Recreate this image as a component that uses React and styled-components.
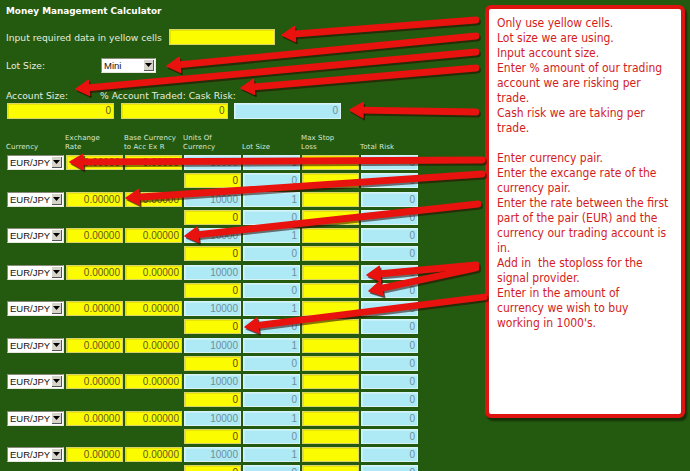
import styled, { createGlobalStyle } from "styled-components";

const GlobalStyle = createGlobalStyle`
  body {
    margin: 0;
    background: #245a10;
  }
`

const arrows = [
  [476, 20, 282, 35],
  [476, 36, 167, 66],
  [476, 52, 76, 89],
  [476, 68, 241, 88],
  [476, 112, 350, 110],
  [482, 160, 70, 162],
  [482, 174, 126, 198],
  [478, 204, 185, 236],
  [476, 265, 367, 275],
  [476, 268, 369, 291],
  [484, 297, 245, 327],
]

const columns = [
  "Currency",
  "Exchange\nRate",
  "Base Currency\nto Acc Ex R",
  "Units Of\nCurrency",
  "Lot Size",
  "Max Stop\nLoss",
  "Total Risk",
]

function Arrow({ x1, y1, x2, y2, dx = 0, dy = 0, color }) {
  const len = Math.hypot(x2 - x1, y2 - y1)
  const ux = (x2 - x1) / len
  const uy = (y2 - y1) / len
  const head = 13
  const half = 7.5
  const bx = x2 - ux * head
  const by = y2 - uy * head
  const pts = [
    [x2, y2],
    [bx - uy * half, by + ux * half],
    [bx + uy * half, by - ux * half],
  ]
    .map(([a, b]) => `${a + dx},${b + dy}`)
    .join(" ")
  return (
    <g>
      <line
        x1={x1 + dx}
        y1={y1 + dy}
        x2={bx + ux * 2 + dx}
        y2={by + uy * 2 + dy}
        stroke={color}
        strokeWidth="6.8"
        strokeLinecap="round"
      />
      <polygon points={pts} fill={color} stroke={color} strokeWidth="1.5" strokeLinejoin="round" />
    </g>
  )
}

function Select({ value, width }) {
  return (
    <SelectBox $width={width}>
      <span>{value}</span>
      <SelectButton>
        <svg width="7" height="4" viewBox="0 0 7 4">
          <path d="M0 0h7L3.5 4z" fill="#000" />
        </svg>
      </SelectButton>
    </SelectBox>
  )
}

export default function App() {
  const pairs = Array.from({ length: 9 })

  return (
    <Page>
      <GlobalStyle />
      <Calculator>
        <Title>Money Management Calculator</Title>
        <FieldRow $label={163} $top={12}>
          <Label>Input required data in yellow cells</Label>
          <Cell $kind="yellow" $w={106} />
        </FieldRow>
        <FieldRow $label={95} $top={12}>
          <Label>Lot Size:</Label>
          <Select value="Mini" width={55} />
        </FieldRow>
        <AccountLabels>
          <Label>Account Size:</Label>
          <Label>% Account Traded: Cask Risk:</Label>
        </AccountLabels>
        <AccountInputs>
          <Cell $kind="yellow">0</Cell>
          <Cell $kind="yellow">0</Cell>
          <Cell $kind="cyan">0</Cell>
        </AccountInputs>
        <HeaderRow>
          {columns.map((c) => (
            <HeadCell key={c}>{c}</HeadCell>
          ))}
        </HeaderRow>
        <Table>
          {pairs.map((_, i) => (
            <Pair key={i}>
              <Select value="EUR/JPY" />
              <Cell $kind="yellow">0.00000</Cell>
              <Cell $kind="yellow">0.00000</Cell>
              <Cell $kind="cyan">10000</Cell>
              <Cell $kind="cyan">1</Cell>
              <Cell $kind="yellow" />
              <Cell $kind="cyan">0</Cell>

              <Blank />
              <Blank />
              <Blank />
              <Cell $kind="yellow" $strong>0</Cell>
              <Cell $kind="cyan">0</Cell>
              <Cell $kind="yellow" />
              <Cell $kind="cyan">0</Cell>
            </Pair>
          ))}
        </Table>
      </Calculator>

      <Notes>
        <p>
          Only use yellow cells.<br />
          Lot size we are using.<br />
          Input account size.<br />
          Enter % amount of our trading<br />
          account we are risking per<br />
          trade.<br />
          Cash risk we are taking per<br />
          trade.
        </p>
        <p>
          Enter currency pair.<br />
          Enter the excange rate of the<br />
          currency pair.<br />
          Enter the rate between the first<br />
          part of the pair (EUR) and the<br />
          currency our trading account is<br />
          in.<br />
          Add in&nbsp; the stoploss for the<br />
          signal provider.<br />
          Enter in the amount of<br />
          currency we wish to buy<br />
          working in 1000's.
        </p>
      </Notes>

      <Overlay width="690" height="471" viewBox="0 0 690 471">
        {arrows.map(([x1, y1, x2, y2], i) => (
          <Arrow key={"s" + i} x1={x1} y1={y1} x2={x2} y2={y2} dx={1.5} dy={2} color="rgba(40,10,0,0.55)" />
        ))}
        {arrows.map(([x1, y1, x2, y2], i) => (
          <Arrow key={"a" + i} x1={x1} y1={y1} x2={x2} y2={y2} color="#e8120e" />
        ))}
      </Overlay>
    </Page>
  )
}

const Page = styled.div`
  position: relative;
  width: 690px;
  height: 471px;
  overflow: hidden;
  background: #245a10;
  display: flex;
  align-items: flex-start;
  font-family: "DejaVu Sans", Verdana, sans-serif;
`
const Calculator = styled.div`
  flex: 0 0 485px;
  padding-left: 6px;
  box-sizing: border-box;
`
const Title = styled.div`
  padding-top: 5px;
  font-size: 8.9px;
  line-height: 12px;
  font-weight: bold;
  color: #ffffff;
`
const FieldRow = styled.div`
  display: grid;
  grid-template-columns: ${(p) => p.$label}px auto;
  align-items: center;
  margin-top: ${(p) => p.$top}px;
  height: 16px;
`
const Label = styled.div`
  font-size: 9.2px;
  color: #e4ecdc;
  white-space: nowrap;
`
const AccountLabels = styled.div`
  display: grid;
  grid-template-columns: 94px auto;
  margin-top: 16px;
  height: 13px;
  align-items: center;
`
const AccountInputs = styled.div`
  display: grid;
  grid-template-columns: repeat(3, 107px);
  column-gap: 6.5px;
  margin-top: 1px;
  margin-left: 1px;
  height: 16px;
`
const Cell = styled.div`
  box-sizing: border-box;
  width: ${(p) => (p.$w ? p.$w + "px" : "auto")};
  height: ${(p) => (p.$w ? "16px" : "100%")};
  background: ${(p) => (p.$kind === "yellow" ? "#fcfc00" : "#aee9f6")};
  border: 1px solid ${(p) => (p.$kind === "yellow" ? "#d8d46a" : "#d8f2f6")};
  box-shadow: inset 1px 1px 0 ${(p) => (p.$kind === "yellow" ? "#e8e400" : "#c4f0fa")};
  color: ${(p) => (p.$kind === "yellow" ? (p.$strong ? "#5a4a00" : "#5e5a20") : "#6f8f98")};
  font-family: "Liberation Sans", Arial, sans-serif;
  font-size: 10px;
  line-height: 13px;
  text-align: right;
  padding-right: 2px;
  overflow: hidden;
`
const SelectBox = styled.div`
  box-sizing: border-box;
  width: ${(p) => (p.$width ? p.$width + "px" : "auto")};
  height: 15px;
  display: flex;
  align-items: stretch;
  background: #ffffff;
  border: 1px solid #8a8a7a;
  border-right-color: #e8e8e0;
  border-bottom-color: #e8e8e0;
  font-family: "Liberation Sans", Arial, sans-serif;
  font-size: 9.5px;
  color: #111;

  span {
    flex: 1;
    padding-left: 2px;
    line-height: 13px;
  }
`
const SelectButton = styled.div`
  width: 9px;
  margin: 1px;
  background: #d6d3cb;
  border-right: 1px solid #555;
  border-bottom: 1px solid #555;
  display: flex;
  align-items: center;
  justify-content: center;
`
const HeaderRow = styled.div`
  display: grid;
  grid-template-columns: repeat(7, 57px);
  column-gap: 2px;
  margin-top: 14px;
  height: 19px;
  align-items: end;
`
const HeadCell = styled.div`
  font-size: 7px;
  line-height: 9px;
  color: #d8e6d0;
  white-space: pre;
  letter-spacing: 0.1px;
`
const Table = styled.div`
  margin-top: 3px;
  margin-left: 1px;
  display: flex;
  flex-direction: column;
  gap: 3.25px;
`
const Pair = styled.div`
  display: grid;
  grid-template-columns: repeat(7, 57px);
  grid-auto-rows: 15px;
  column-gap: 2px;
  row-gap: 3.25px;
`
const Blank = styled.div``
const Notes = styled.div`
  flex: 0 0 200px;
  height: 413px;
  margin-top: 5px;
  box-sizing: border-box;
  background: #ffffff;
  border: 4px solid #de1410;
  border-radius: 6px;
  box-shadow: 2px 3px 2px rgba(10, 20, 0, 0.6);
  padding: 7px 0 0 8px;
  font-family: "DejaVu Sans Condensed", "Liberation Sans", sans-serif;
  font-size: 12px;
  line-height: 15px;
  color: #d41c1c;
  white-space: nowrap;

  p {
    margin: 0 0 15px 0;
  }
`
const Overlay = styled.svg`
  position: absolute;
  left: 0;
  top: 0;
  pointer-events: none;
`
